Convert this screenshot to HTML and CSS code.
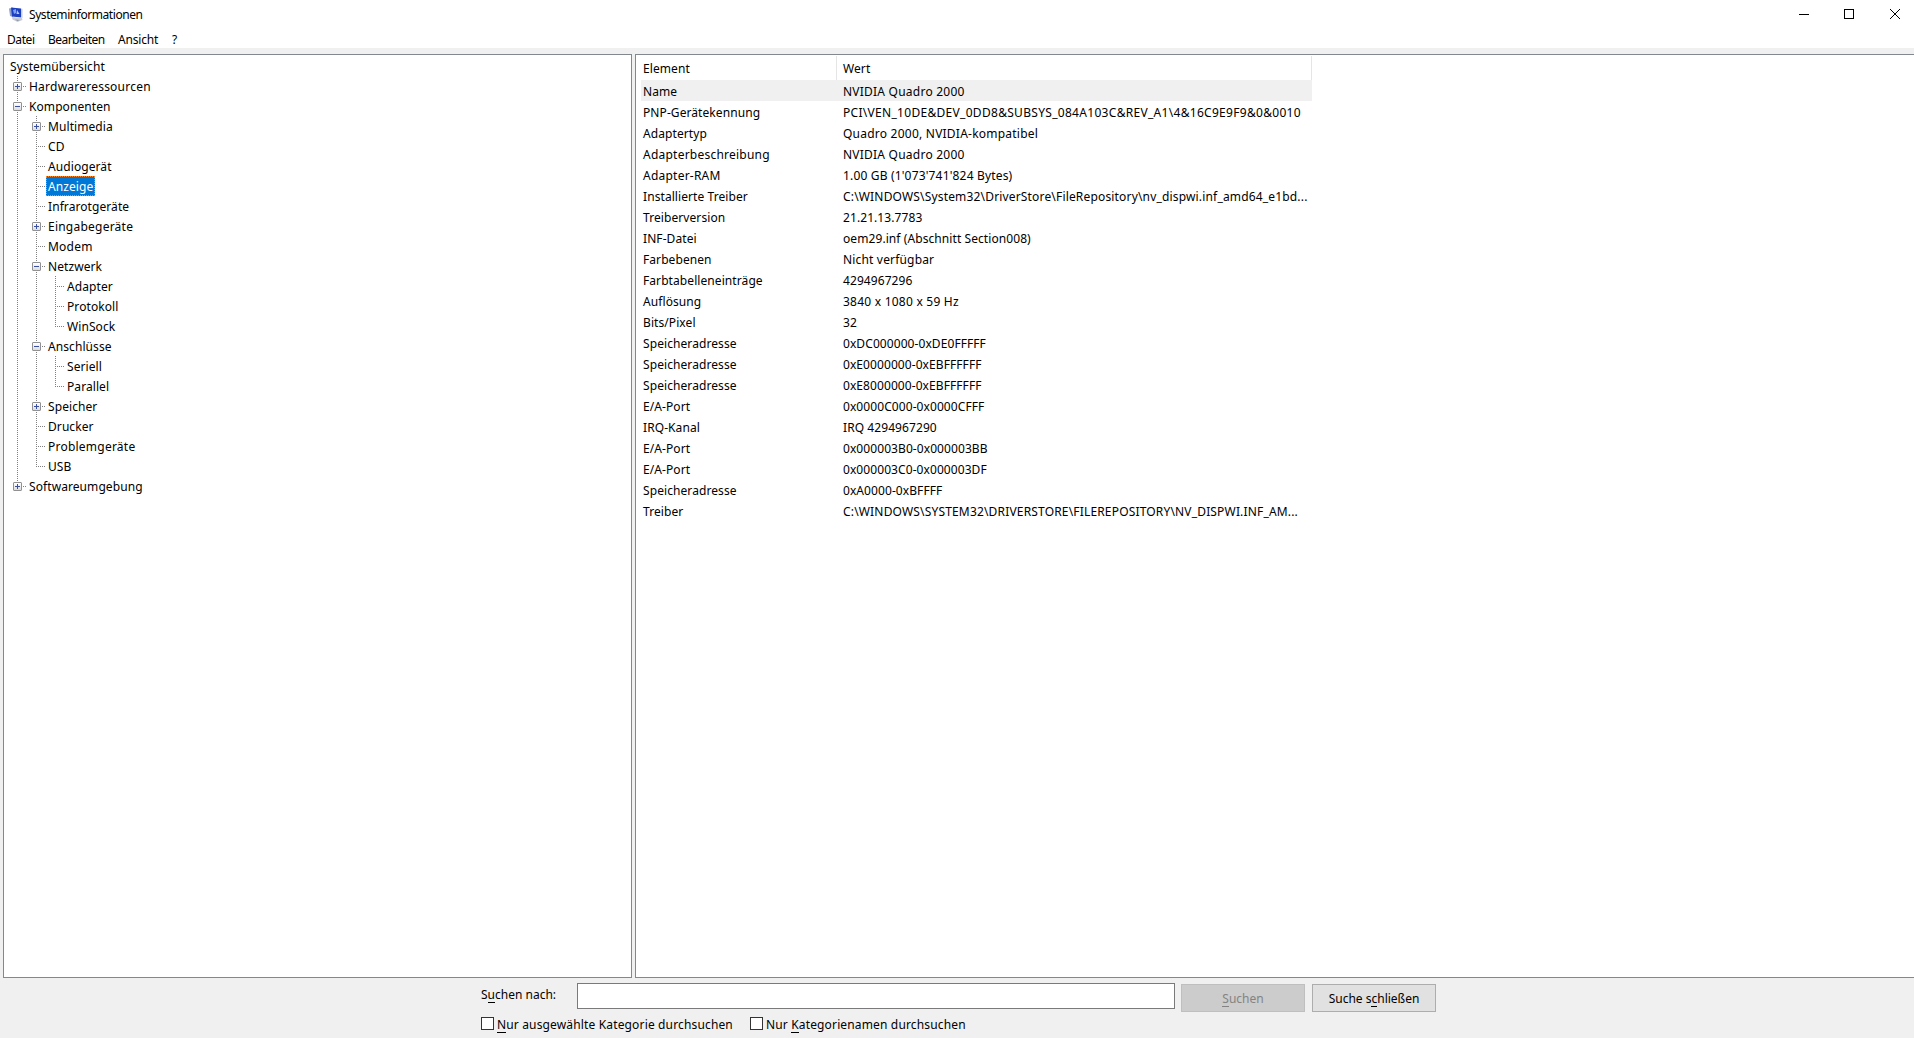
FILE: index.html
```
<!DOCTYPE html>
<html lang="de">

<head>
    <meta charset="UTF-8">
    <meta name="viewport" content="width=device-width, initial-scale=1.0">
    <title>Systeminformationen</title>
    <link rel="stylesheet" href="styles.css">
</head>

<body>
    <header class="titlebar">
        <svg class="app-icon" width="14" height="16" viewBox="0 0 14 16">
            <path d="M0 1.5l4-1v9.500l-3-1z" fill="#8fa0cc" />
            <path d="M2 .5l10 1v9l-9-1z" fill="#1c3fc0" />
            <path d="M12 1.500l1.500.5v9l-1.500-.5z" fill="#c9cedb" />
            <path d="M4 3l3-1v4l-2 1z" fill="#7d9ff0" />
            <path d="M8 3l2.500 4h-3z" fill="#b3c7fa" />
            <path d="M3 10l10 1 .5 2-5 2-5-2.500z" fill="#c8ccd6" />
            <path d="M6 12.500l5 .5-2.500 1z" fill="#8d94a6" />
        </svg>
        <span class="title">Systeminformationen</span>
        <div class="window-buttons">
            <svg width="10" height="10" viewBox="0 0 10 10" shape-rendering="crispEdges"><path d="M0 5.5h10" /></svg>
            <svg width="10" height="10" viewBox="0 0 10 10" shape-rendering="crispEdges"><path d="M.5 .5h9v9h-9z" /></svg>
            <svg class="close" width="10" height="10" viewBox="0 0 10 10"><path d="M0 0l10 10M10 0L0 10" /></svg>
        </div>
    </header>
    <nav class="menubar">
        <span class="menu-datei">Datei</span>
        <span class="menu-bearbeiten">Bearbeiten</span>
        <span class="menu-ansicht">Ansicht</span>
        <span>?</span>
    </nav>

    <main class="panes">
        <section class="pane tree-pane">
            <div class="root">Systemübersicht</div>
            <ul class="tree">
                <li><div class="node plus"><span class="wide">Hardwareressourcen</span></div></li>
                <li>
                    <div class="node minus"><span>Komponenten</span></div>
                    <ul>
                        <li><div class="node plus"><span>Multimedia</span></div></li>
                        <li><div class="node"><span>CD</span></div></li>
                        <li><div class="node"><span>Audiogerät</span></div></li>
                        <li><div class="node"><span class="selected">Anzeige</span></div></li>
                        <li><div class="node"><span>Infrarotgeräte</span></div></li>
                        <li><div class="node plus"><span class="wide">Eingabegeräte</span></div></li>
                        <li><div class="node"><span class="wide">Modem</span></div></li>
                        <li>
                            <div class="node minus"><span>Netzwerk</span></div>
                            <ul>
                                <li><div class="node"><span>Adapter</span></div></li>
                                <li><div class="node"><span>Protokoll</span></div></li>
                                <li><div class="node"><span>WinSock</span></div></li>
                            </ul>
                        </li>
                        <li>
                            <div class="node minus"><span>Anschlüsse</span></div>
                            <ul>
                                <li><div class="node"><span>Seriell</span></div></li>
                                <li><div class="node"><span>Parallel</span></div></li>
                            </ul>
                        </li>
                        <li><div class="node plus"><span>Speicher</span></div></li>
                        <li><div class="node"><span>Drucker</span></div></li>
                        <li><div class="node"><span class="wide">Problemgeräte</span></div></li>
                        <li><div class="node"><span>USB</span></div></li>
                    </ul>
                </li>
                <li><div class="node plus"><span>Softwareumgebung</span></div></li>
            </ul>
        </section>

        <section class="pane list-pane">
            <table class="list">
                <thead>
                    <tr><th class="col-element">Element</th><th>Wert</th></tr>
                </thead>
                <tbody>
                    <tr class="active"><td>Name</td><td class="wide">NVIDIA Quadro 2000</td></tr>
                    <tr><td>PNP-Gerätekennung</td><td class="device-id">PCI\VEN_10DE&amp;DEV_0DD8&amp;SUBSYS_084A103C&amp;REV_A1\4&amp;16C9E9F9&amp;0&amp;0010</td></tr>
                    <tr><td>Adaptertyp</td><td class="wide">Quadro 2000, NVIDIA-kompatibel</td></tr>
                    <tr><td class="wide">Adapterbeschreibung</td><td class="wide">NVIDIA Quadro 2000</td></tr>
                    <tr><td class="wide">Adapter-RAM</td><td class="path">1.00 GB (1'073'741'824 Bytes)</td></tr>
                    <tr><td>Installierte Treiber</td><td class="path">C:\WINDOWS\System32\DriverStore\FileRepository\nv_dispwi.inf_amd64_e1bd...</td></tr>
                    <tr><td>Treiberversion</td><td>21.21.13.7783</td></tr>
                    <tr><td>INF-Datei</td><td>oem29.inf (Abschnitt Section008)</td></tr>
                    <tr><td>Farbebenen</td><td class="path">Nicht verfügbar</td></tr>
                    <tr><td>Farbtabelleneinträge</td><td>4294967296</td></tr>
                    <tr><td>Auflösung</td><td class="wide">3840 x 1080 x 59 Hz</td></tr>
                    <tr><td>Bits/Pixel</td><td>32</td></tr>
                    <tr><td>Speicheradresse</td><td>0xDC000000-0xDE0FFFFF</td></tr>
                    <tr><td>Speicheradresse</td><td>0xE0000000-0xEBFFFFFF</td></tr>
                    <tr><td>Speicheradresse</td><td>0xE8000000-0xEBFFFFFF</td></tr>
                    <tr><td>E/A-Port</td><td>0x0000C000-0x0000CFFF</td></tr>
                    <tr><td>IRQ-Kanal</td><td>IRQ 4294967290</td></tr>
                    <tr><td>E/A-Port</td><td>0x000003B0-0x000003BB</td></tr>
                    <tr><td>E/A-Port</td><td>0x000003C0-0x000003DF</td></tr>
                    <tr><td>Speicheradresse</td><td>0xA0000-0xBFFFF</td></tr>
                    <tr><td>Treiber</td><td class="path">C:\WINDOWS\SYSTEM32\DRIVERSTORE\FILEREPOSITORY\NV_DISPWI.INF_AM...</td></tr>
                </tbody>
            </table>
        </section>
    </main>

    <form class="search">
        <div class="search-row">
            <label class="search-label" for="query">S<u>u</u>chen nach:</label>
            <input class="search-input" type="text" id="query">
            <button class="button" type="button" disabled><u>S</u>uchen</button>
            <button class="button" type="button">Suche s<u>c</u>hließen</button>
        </div>
        <div class="option-row">
            <label class="option option-selected"><input type="checkbox"><span><u>N</u>ur ausgewählte Kategorie durchsuchen</span></label>
            <label class="option"><input type="checkbox"><span>Nur <u>K</u>ategorienamen durchsuchen</span></label>
        </div>
    </form>
</body>

</html>
```
FILE: styles.css
```
*,
*::before {
    box-sizing: border-box;
}

body {
    margin: 0;
    height: 1038px;
    display: flex;
    flex-direction: column;
    overflow: hidden;
    background-color: #f0f0f0;
    color: #000;
    font-family: "Noto Sans", "Open Sans", sans-serif;
    font-size: 12px;
    white-space: nowrap;
}

u {
    text-decoration: none;
    box-shadow: 0 1px 0 currentColor;
    display: inline-block;
    line-height: 14px;
}

.titlebar {
    display: flex;
    align-items: center;
    height: 29px;
    padding: 0 14px 0 9px;
    background-color: #fff;
}

.title {
    margin-left: 6px;
    letter-spacing: -0.44px;
}

.window-buttons {
    display: flex;
    align-self: flex-start;
    gap: 35px;
    margin-left: auto;
    padding-top: 9px;
}

.window-buttons svg {
    fill: none;
    stroke: #000;
}

.window-buttons .close {
    margin-left: 1px;
}

.menubar {
    display: flex;
    height: 19px;
    padding-left: 7px;
    line-height: 21px;
    background-color: #fff;
    letter-spacing: -0.2px;
}

.menu-datei {
    width: 41px;
    letter-spacing: -0.4px;
}

.menu-bearbeiten {
    width: 70px;
    letter-spacing: -0.55px;
}

.menu-ansicht {
    width: 54px;
}

.panes {
    display: flex;
    gap: 3px;
    height: 930px;
    padding: 6px 0 0 3px;
}

.pane {
    border: 1px solid #828790;
    background-color: #fff;
    letter-spacing: 0.08px;
}

.tree-pane {
    width: 629px;
    padding: 1px 0 0 6px;
}

.root {
    height: 20px;
    line-height: 22px;
}

.tree,
.tree ul {
    margin: 0;
    padding: 0;
    list-style: none;
}

.tree {
    padding-left: 3px;
}

.tree ul {
    padding-left: 19px;
}

/* dotted connector lines */
.tree li {
    background: repeating-linear-gradient(#808080 0 1px, transparent 1px 2px) 4px 0 / 1px 100% no-repeat;
}

.tree li:last-child {
    background-size: 1px 11px;
}

.node {
    position: relative;
    display: flex;
    height: 20px;
    padding-left: 14px;
    line-height: 22px;
    background: repeating-linear-gradient(90deg, #808080 0 1px, transparent 1px 2px) 4px 10px / 9px 1px no-repeat;
}

.node span {
    padding: 0 2px;
}

.node .selected {
    background-color: #0078d7;
    color: #fff;
    outline: 1px dotted #ff8728;
    outline-offset: -1px;
}

/* expand / collapse box */
.plus::before,
.minus::before {
    content: "";
    position: absolute;
    left: 0;
    top: 6px;
    width: 9px;
    height: 9px;
    border: 1px solid #919191;
    border-radius: 1px;
    background: linear-gradient(#3c50a0, #3c50a0) 1px 3px / 5px 1px no-repeat, linear-gradient(#fff, #dcdcdc);
}

.plus::before {
    background: linear-gradient(#3c50a0, #3c50a0) 1px 3px / 5px 1px no-repeat, linear-gradient(#3c50a0, #3c50a0) 3px 1px / 1px 5px no-repeat, linear-gradient(#fff, #dcdcdc);
}

.list-pane {
    flex: 1;
    padding: 1px 0 0 5px;
    border-right: none;
}

.list {
    width: 671px;
    table-layout: fixed;
    border-collapse: separate;
    border-spacing: 0;
}

.list th,
.list td {
    height: 21px;
    padding: 2px 2px 0;
    line-height: 19px;
    font-weight: normal;
    text-align: left;
}

.list th {
    height: 24px;
    padding-top: 1px;
    line-height: 23px;
    border-right: 1px solid #e5e5e5;
}

.list .col-element {
    width: 196px;
}

.list td + td,
.list th + th {
    padding-left: 6px;
}

.active {
    background-color: #f0f0f0;
}

.path {
    letter-spacing: 0.17px;
}

.wide {
    letter-spacing: 0.23px;
}

.device-id {
    letter-spacing: 0.3px;
}

.search {
    padding: 5px 0 0 481px;
}

.search-row {
    display: flex;
    height: 34px;
}

.search-label {
    width: 96px;
    line-height: 23px;
}

.search-input {
    width: 598px;
    height: 26px;
    margin-right: 6px;
    border: 1px solid #7a7a7a;
    background-color: #fff;
}

.button {
    width: 124px;
    height: 28px;
    margin: 1px 7px 0 0;
    padding: 0;
    border: 1px solid #adadad;
    background-color: #e1e1e1;
    color: #000;
    font: inherit;
}

.button:disabled {
    border-color: #bfbfbf;
    background-color: #ccc;
    color: #838383;
}

.option-row {
    display: flex;
}

.option {
    display: flex;
    line-height: 15px;
    letter-spacing: 0.15px;
}

.option-selected {
    width: 269px;
}

.option input {
    appearance: none;
    width: 13px;
    height: 13px;
    margin: 0 3px 0 0;
    border: 1px solid #333;
    background-color: #fff;
}
```
